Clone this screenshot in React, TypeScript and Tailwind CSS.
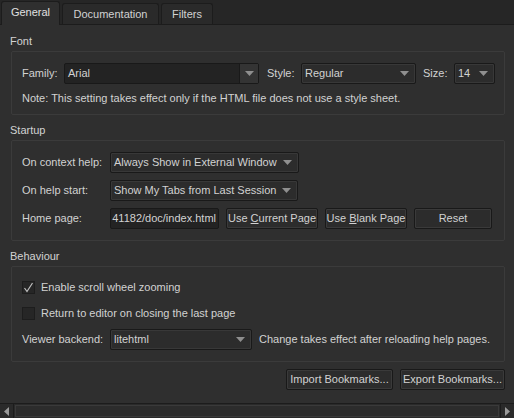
import React from 'react';

const Arrow = () => (
  <svg width="9" height="5" viewBox="0 0 9 5" className="shrink-0">
    <path d="M0 0 H9 L4.5 5 Z" fill="#8f8f8f" />
  </svg>
);

function Combo({ value, width, editable = false }: { value: string; width: string; editable?: boolean }) {
  if (editable) {
    return (
      <div className={`${width} h-[21px] flex border border-[#191919] rounded-[2px] bg-[#232323]`}>
        <div className="flex-1 pl-[3px] flex items-center">{value}</div>
        <div className="w-[19px] flex items-center justify-center bg-[#343434] border-l border-[#191919]">
          <Arrow />
        </div>
      </div>
    );
  }
  return (
    <div className={`${width} h-[21px] flex items-center justify-between pl-[3px] pr-[6px] border border-[#191919] rounded-[2px] bg-[#2c2c2c] shadow-[inset_0_0_0_1px_#383838]`}>
      <span>{value}</span>
      <Arrow />
    </div>
  );
}

function Button({ children, width }: { children: React.ReactNode; width: string }) {
  return (
    <div className={`${width} h-[21px] flex items-center justify-center border border-[#191919] rounded-[2px] bg-[#2c2c2c] shadow-[inset_0_0_0_1px_#3a3a3a]`}>
      <span className="whitespace-pre">{children}</span>
    </div>
  );
}

function Group({ title, children, className = '' }: { title: string; children: React.ReactNode; className?: string }) {
  return (
    <div>
      <div className="h-[14px] leading-[14px] pl-[10px]">{title}</div>
      <div className={`mt-[3px] ml-[11px] mr-[9px] border border-[#3b3b3b] rounded-[2px] ${className}`}>{children}</div>
    </div>
  );
}

function Checkbox({ checked, label }: { checked: boolean; label: string }) {
  return (
    <div className="flex items-center h-[14px] gap-[6px]">
      <div className="w-[13px] h-[13px] bg-[#262626] border border-[#1d1d1d] flex items-center justify-center">
        {checked && (
          <svg width="11" height="11" viewBox="0 0 11 11">
            <path d="M1.5 6 L4 9.5 L9.5 1" fill="none" stroke="#c0c0c0" strokeWidth="1.2" />
          </svg>
        )}
      </div>
      <span>{label}</span>
    </div>
  );
}

export default function App() {
  return (
    <div
      className="w-[514px] h-[418px] bg-[#262626] flex flex-col text-[11px] text-[#d2d2d2] overflow-hidden"
      style={{ fontFamily: '"Liberation Sans", Arial, sans-serif' }}
    >
      {/* Tabs */}
      <div className="h-[24px] flex items-end pl-[1px] gap-[2px] shrink-0">
        <div className="w-[59px] h-[24px] -mb-px pb-[3px] flex items-center justify-center bg-[#2f2f2f] border border-b-0 border-[#1c1c1c] rounded-t-[3px] text-[#e0e0e0] z-10">
          General
        </div>
        <div className="w-[97px] h-[21px] flex items-center justify-center bg-[#2a2a2a] border border-b-0 border-[#1c1c1c] rounded-t-[3px]">
          Documentation
        </div>
        <div className="w-[52px] h-[21px] flex items-center justify-center bg-[#2a2a2a] border border-b-0 border-[#1c1c1c] rounded-t-[3px]">
          Filters
        </div>
      </div>

      {/* Pane */}
      <div className="h-[380px] bg-[#2f2f2f] border-t border-b border-[#1c1c1c] pt-[9px] flex flex-col">
        <Group title="Font" className="pt-[10px] pb-[9px] pl-[10px]">
          <div className="flex items-center h-[22px]">
            <span className="w-[42px]">Family:</span>
            <Combo value="Arial" width="w-[195px]" editable />
            <span className="ml-[8px] w-[34px]">Style:</span>
            <Combo value="Regular" width="w-[115px]" />
            <span className="ml-[7px] w-[31px]">Size:</span>
            <Combo value="14" width="w-[41px]" />
          </div>
          <div className="mt-[7px] h-[14px] leading-[14px]">
            Note: This setting takes effect only if the HTML file does not use a style sheet.
          </div>
        </Group>

        <div className="mt-[8px]">
          <Group title="Startup" className="pt-[11px] pb-[11px] pl-[10px]">
            <div className="flex flex-col gap-[7px]">
              <div className="flex items-center">
                <span className="w-[88px]">On context help:</span>
                <Combo value="Always Show in External Window" width="w-[189px]" />
              </div>
              <div className="flex items-center">
                <span className="w-[88px]">On help start:</span>
                <Combo value="Show My Tabs from Last Session" width="w-[188px]" />
              </div>
              <div className="flex items-center">
                <span className="w-[88px]">Home page:</span>
                <div className="w-[109px] h-[21px] flex items-center justify-end pr-[2px] border border-[#191919] rounded-[2px] bg-[#232323] overflow-hidden whitespace-nowrap">
                  41182/doc/index.html
                </div>
                <div className="ml-[7px] flex gap-[7px]">
                  <Button width="w-[92px]">
                    Use <span className="underline">C</span>urrent Page
                  </Button>
                  <Button width="w-[82px]">
                    Use <span className="underline">B</span>lank Page
                  </Button>
                  <Button width="w-[78px]">Reset</Button>
                </div>
              </div>
            </div>
          </Group>
        </div>

        <div className="mt-[8px]">
          <Group title="Behaviour" className="pt-[13px] pb-[11px] pl-[10px]">
            <Checkbox checked label="Enable scroll wheel zooming" />
            <div className="mt-[12px]">
              <Checkbox checked={false} label="Return to editor on closing the last page" />
            </div>
            <div className="mt-[9px] flex items-center">
              <span className="w-[88px]">Viewer backend:</span>
              <Combo value="litehtml" width="w-[142px]" />
              <span className="ml-[7px]">Change takes effect after reloading help pages.</span>
            </div>
          </Group>
        </div>

        <div className="mt-[7px] mr-[9px] flex justify-end gap-[7px]">
          <Button width="w-[107px]">Import Bookmarks...</Button>
          <Button width="w-[105px]">Export Bookmarks...</Button>
        </div>
      </div>

      {/* Horizontal scrollbar */}
      <div className="flex-1 flex bg-[#2a2a2a]">
        <div className="w-[14px] flex items-center justify-center border-r border-[#1c1c1c]">
          <svg width="5" height="9" viewBox="0 0 5 9">
            <path d="M5 0 V9 L0 4.5 Z" fill="#9a9a9a" />
          </svg>
        </div>
        <div className="flex-1 my-[1px] mx-[1px] bg-[#2c2c2c] border border-[#3a3a3a]" />
        <div className="w-[14px] flex items-center justify-center border-l border-[#1c1c1c]">
          <svg width="5" height="9" viewBox="0 0 5 9">
            <path d="M0 0 V9 L5 4.5 Z" fill="#9a9a9a" />
          </svg>
        </div>
      </div>
    </div>
  );
}
